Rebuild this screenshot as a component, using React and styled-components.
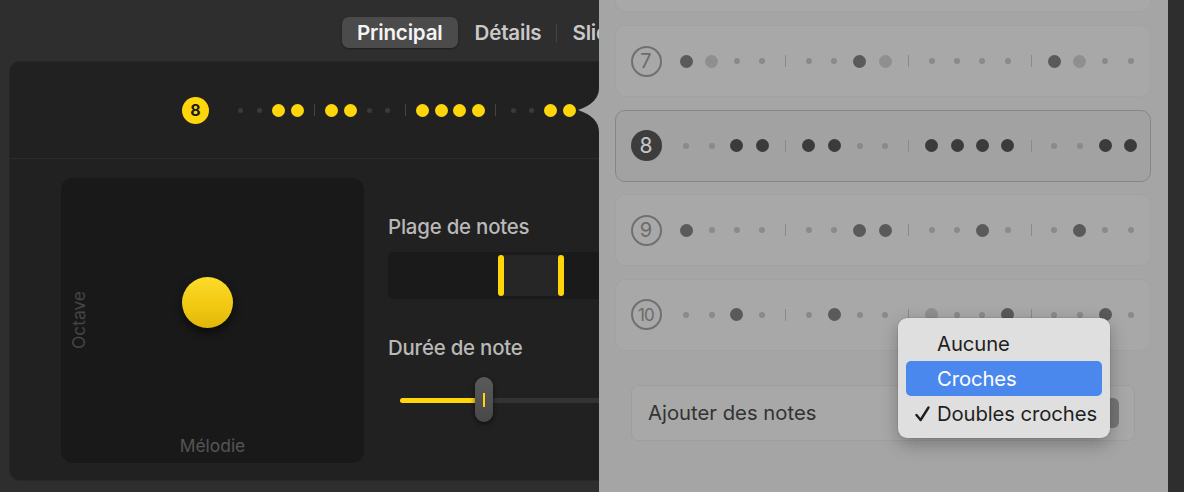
import React from "react";
import styled, { createGlobalStyle } from "styled-components";

// #region styled-components
const GlobalStyle = createGlobalStyle`
  html, body {
    margin: 0;
    padding: 0;
    background: #2e2e2e;
  }
  body {
    font-family: Inter, "Noto Sans", "Liberation Sans", sans-serif;
    -webkit-font-smoothing: antialiased;
  }
`;

const Screen = styled.div`
  position: relative;
  width: 1184px;
  height: 492px;
  overflow: hidden;
  background: #2e2e2e;
  display: flex;
  flex-direction: column;
`;

const TabBar = styled.div`
  height: 62px;
  flex: none;
  display: flex;
  align-items: flex-start;
  padding: 17px 0 0 342px;
  box-sizing: border-box;
`;

const Tab = styled.div`
  height: 31px;
  padding: 0 15px;
  display: flex;
  align-items: center;
  border-radius: 7px;
  font-size: 20.6px;
  font-weight: 600;
  letter-spacing: -0.2px;
  color: ${({ $active }) => ($active ? "#f4f4f4" : "#c9c9c9")};
  background: ${({ $active }) => ($active ? "#4b4b4b" : "transparent")};
  box-shadow: ${({ $active }) => ($active ? "0 1px 2px rgba(0,0,0,0.35)" : "none")};
  margin-left: ${({ $gap }) => $gap || 0}px;
`;

const TabSep = styled.span`
  width: 1px;
  height: 18px;
  margin: 7px 0 0 0;
  background: #464646;
`;

const Panel = styled.div`
  margin-left: 10px;
  width: 1150px;
  height: 418px;
  background: #212121;
  border-radius: 10px;
  box-shadow: 0 0 0 1px #272727;
  display: flex;
  flex-direction: column;
`;

const PatternStrip = styled.div`
  height: 96px;
  flex: none;
  display: flex;
  align-items: center;
  padding-left: 172px;
  border-bottom: 1px solid #2b2b2b;
`;

const Lower = styled.div`
  display: flex;
  gap: 24px;
  padding: 19px 0 0 51px;
`;

const Pad = styled.div`
  position: relative;
  width: 303px;
  height: 285px;
  background: #191919;
  border-radius: 12px;
  display: grid;
  grid-template-areas: "stack";
`;

const AxisLabel = styled.span`
  grid-area: stack;
  font-size: 17.4px;
  color: ${({ $dim }) => ($dim ? "#454545" : "#555")};
  ${({ $vertical }) =>
    $vertical
      ? `writing-mode: vertical-rl; transform: rotate(180deg); align-self: center; justify-self: start; margin-left: 7px;`
      : `align-self: end; justify-self: center; margin-bottom: 7px;`}
`;

const Puck = styled.span`
  position: absolute;
  width: 51px;
  height: 51px;
  margin: -25.5px 0 0 -25.5px;
  border-radius: 50%;
  background: linear-gradient(180deg, #fcdc2a 0%, #f2c912 55%, #e0b70a 100%);
  box-shadow: 0 5px 8px rgba(0, 0, 0, 0.55);
`;

const Controls = styled.div`
  width: 320px;
  display: flex;
  flex-direction: column;
`;

const ControlLabel = styled.div`
  font-size: 20.4px;
  font-weight: 500;
  line-height: 24px;
  color: #b9b9b9;
  letter-spacing: -0.2px;
  margin-top: ${({ $top }) => $top}px;
`;

const RangeTrack = styled.div`
  position: relative;
  margin-top: 13px;
  width: 320px;
  height: 47px;
  background: #1a1a1a;
  border-radius: 5px;
`;

const RangeSpan = styled.span`
  position: absolute;
  top: 3px;
  bottom: 3px;
  background: #262626;
`;

const RangeHandle = styled.span`
  position: absolute;
  top: 3px;
  bottom: 3px;
  width: 6px;
  border-radius: 3px;
  background: #ffd60a;
`;

const Slider = styled.div`
  position: relative;
  margin-top: 17px;
  width: 320px;
  height: 46px;
  display: flex;
  align-items: center;
`;

const SliderRail = styled.div`
  margin-left: 12px;
  flex: 1;
  height: 5px;
  border-radius: 3px;
  background: #333;
  display: flex;
`;

const SliderFill = styled.span`
  height: 100%;
  border-radius: 3px;
  background: #ffd60a;
`;

const SliderThumb = styled.span`
  position: absolute;
  top: 0;
  width: 18px;
  height: 45px;
  border-radius: 9px;
  background: linear-gradient(180deg, #5a5a5a, #484848);
  box-shadow: 0 2px 5px rgba(0, 0, 0, 0.55);
  display: flex;
  align-items: center;
  justify-content: center;

  &::before {
    content: "";
    width: 2px;
    height: 14px;
    background: #ffd60a;
  }
`;

const Badge = styled.span`
  flex: none;
  width: ${({ $size }) => $size}px;
  height: ${({ $size }) => $size}px;
  border-radius: 50%;
  box-sizing: border-box;
  display: flex;
  align-items: center;
  justify-content: center;
  font-size: ${({ $font }) => $font}px;
  font-weight: ${({ $weight }) => $weight || 400};
  letter-spacing: ${({ $tight }) => ($tight ? "-0.8px" : "0")};
  color: ${({ $color }) => $color};
  background: ${({ $fill }) => $fill || "transparent"};
  border: ${({ $ring }) => ($ring ? `2px solid ${$ring}` : "none")};
  margin-right: ${({ $gap }) => $gap}px;
`;

const Beats = styled.div`
  display: flex;
  align-items: center;
  height: 20px;
`;

const Cell = styled.span`
  flex: none;
  width: ${({ $w }) => $w}px;
  display: flex;
  align-items: center;
  justify-content: center;
`;

const Dot = styled.span`
  width: ${({ $size }) => $size}px;
  height: ${({ $size }) => $size}px;
  border-radius: 50%;
  background: ${({ $color }) => $color};
`;

const BarLine = styled.span`
  width: 1px;
  height: ${({ $h }) => $h}px;
  background: ${({ $color }) => $color};
`;

const Popover = styled.div`
  position: absolute;
  left: 599px;
  right: 16px;
  top: -59.67px;
  bottom: -20px;
  background: #a5a5a5;
  padding: 0 17px 0 16px;
  display: flex;
  flex-direction: column;
  gap: 12.67px;
`;

const PopArrow = styled.svg`
  position: absolute;
  left: -21px;
  top: 147.67px;
`;

const PatternCard = styled.div`
  flex: none;
  height: 72px;
  box-sizing: border-box;
  display: flex;
  align-items: center;
  padding-left: 14.5px;
  border-radius: 10px;
  background: ${({ $active }) => ($active ? "rgba(0,0,0,0.015)" : "rgba(255,255,255,0.035)")};
  border: 1px solid ${({ $active }) => ($active ? "#868686" : "rgba(0,0,0,0.035)")};
`;

const AddField = styled.div`
  margin: 21.33px 16px 0;
  height: 56px;
  box-sizing: border-box;
  border-radius: 7px;
  border: 1px solid rgba(0, 0, 0, 0.06);
  background: rgba(255, 255, 255, 0.035);
  display: flex;
  align-items: center;
  justify-content: space-between;
  padding: 0 15px 0 16px;
  font-size: 20.3px;
  color: #333;
`;

const PopupButton = styled.span`
  width: 190px;
  height: 30px;
  border-radius: 6px;
  background: #767676;
`;

const Menu = styled.div`
  position: absolute;
  left: 898px;
  top: 318px;
  width: 212px;
  box-sizing: border-box;
  padding: 8px 8px 7px;
  background: #dfdfdf;
  border-radius: 9px;
  box-shadow: 0 6px 18px rgba(0, 0, 0, 0.28), 0 0 0 0.5px rgba(0, 0, 0, 0.12);
  display: flex;
  flex-direction: column;
`;

const MenuItem = styled.div`
  height: 35px;
  border-radius: 5px;
  display: flex;
  align-items: center;
  padding-left: 9px;
  font-size: 20.3px;
  letter-spacing: -0.1px;
  color: ${({ $hover }) => ($hover ? "#fff" : "#1f1f1f")};
  background: ${({ $hover }) => ($hover ? "#4a88ed" : "transparent")};
`;

const CheckSlot = styled.span`
  width: 22px;
  flex: none;
  display: flex;
  align-items: center;
`;
// #endregion

const stripLook = {
  cell: 18.7,
  bar: 16,
  small: 5,
  large: 13,
  lineH: 12,
  colors: { small: "#3a3a3a", large: "#ffd60a", light: "#ffd60a", line: "#454545" },
};

const rowLook = (active) => ({
  cell: 25.4,
  bar: 21.2,
  small: 6,
  large: 13,
  lineH: 12,
  colors: {
    small: "#8a8a8a",
    large: active ? "#3b3b3b" : "#5a5a5a",
    light: "#8f8f8f",
    line: "#8a8a8a",
  },
});

// "." small step, "O" strong note, "o" soft note, "|" bar line
const BeatPattern = ({ pattern, look }) => (
  <Beats>
    {pattern.split("").map((ch, i) => {
      if (ch === "|") {
        return (
          <Cell key={i} $w={look.bar}>
            <BarLine $h={look.lineH} $color={look.colors.line} />
          </Cell>
        );
      }
      const big = ch !== ".";
      const color = ch === "O" ? look.colors.large : ch === "o" ? look.colors.light : look.colors.small;
      return (
        <Cell key={i} $w={look.cell}>
          <Dot $size={big ? look.large : look.small} $color={color} />
        </Cell>
      );
    })}
  </Beats>
);

// row 6 only peeks in at the top edge
const patterns = [
  { n: 6, pattern: null },
  { n: 7, pattern: "Oo..|..Oo|....|Oo.." },
  { n: 8, pattern: "..OO|OO..|OOOO|..OO", active: true },
  { n: 9, pattern: "O...|..OO|..O.|.O.." },
  { n: 10, pattern: "..O.|.O..|o..O|..O." },
];

const range = { from: 109.5, to: 170 };
const duration = 0.273;

const CheckMark = () => (
  <svg width="15" height="16" viewBox="0 0 15 16">
    <path d="M1.5 9 L5.6 14 L13.5 1.5" fill="none" stroke="#1f1f1f" strokeWidth="2.4" strokeLinecap="round" strokeLinejoin="round" />
  </svg>
);

const App = () => {
  return (
    <>
      <GlobalStyle />
      <Screen>
        <TabBar>
          <Tab $active>Principal</Tab>
          <Tab $gap={2}>Détails</Tab>
          <TabSep />
          <Tab>Slides</Tab>
        </TabBar>

        <Panel>
          <PatternStrip>
            <Badge $size={27} $font={16} $weight={700} $fill="#ffd60a" $color="#1c1c1c" $gap={22.6}>
              8
            </Badge>
            <BeatPattern pattern="..OO|OO..|OOOO|..OO" look={stripLook} />
          </PatternStrip>

          <Lower>
            <Pad>
              <AxisLabel $vertical $dim>Octave</AxisLabel>
              <AxisLabel>Mélodie</AxisLabel>
              <Puck style={{ left: "48.2%", top: "43.6%" }} />
            </Pad>

            <Controls>
              <ControlLabel $top={37}>Plage de notes</ControlLabel>
              <RangeTrack>
                <RangeSpan style={{ left: range.from + 3, width: range.to - range.from }} />
                <RangeHandle style={{ left: range.from }} />
                <RangeHandle style={{ left: range.to }} />
              </RangeTrack>

              <ControlLabel $top={37}>Durée de note</ControlLabel>
              <Slider>
                <SliderRail>
                  <SliderFill style={{ width: `${duration * 100}%` }} />
                </SliderRail>
                <SliderThumb style={{ left: 12 + duration * 308 - 9 }} />
              </Slider>
            </Controls>
          </Lower>
        </Panel>

        <Popover>
          <PopArrow width="21" height="44" viewBox="0 0 21 44">
            <path d="M21 0 Q21 15 0 22 Q21 29 21 44 Z" fill="#a5a5a5" />
          </PopArrow>

          {patterns.map((p) => (
            <PatternCard key={p.n} $active={p.active}>
              {p.pattern && (
                <>
                  {p.active ? (
                    <Badge $size={31} $font={21} $fill="#3d3d3d" $color="#c6c6c6" $gap={12}>
                      {p.n}
                    </Badge>
                  ) : (
                    <Badge
                      $size={31}
                      $font={p.n > 9 ? 17 : 20}
                      $tight={p.n > 9}
                      $ring="#707070"
                      $color="#6c6c6c"
                      $gap={12}
                    >
                      {p.n}
                    </Badge>
                  )}
                  <BeatPattern pattern={p.pattern} look={rowLook(p.active)} />
                </>
              )}
            </PatternCard>
          ))}

          <AddField>
            Ajouter des notes
            <PopupButton />
          </AddField>
        </Popover>

        <Menu>
          <MenuItem>
            <CheckSlot />
            Aucune
          </MenuItem>
          <MenuItem $hover>
            <CheckSlot />
            Croches
          </MenuItem>
          <MenuItem>
            <CheckSlot>
              <CheckMark />
            </CheckSlot>
            Doubles croches
          </MenuItem>
        </Menu>
      </Screen>
    </>
  );
};

export default App;
